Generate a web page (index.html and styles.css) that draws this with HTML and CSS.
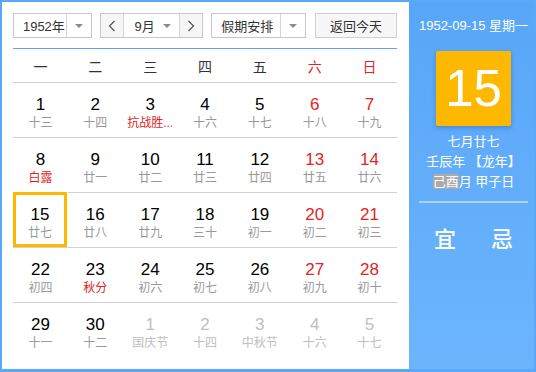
FILE: index.html
```html
<!DOCTYPE html>
<html lang="zh-CN">

<head>
    <meta charset="UTF-8">
    <title>万年历</title>
    <link rel="stylesheet" href="styles.css">
</head>

<body>
    <div class="calendar">
        <div class="main">
            <div class="toolbar">
                <div class="select year">
                    <span class="label">1952年</span>
                    <span class="caret-box"><i class="caret"></i></span>
                </div>
                <div class="select month">
                    <span class="arrow">
                        <svg width="8" height="12" viewBox="0 0 8 12"><polyline points="6.5,1 1.5,6 6.5,11" fill="none" stroke="#555" stroke-width="1.2"/></svg>
                    </span>
                    <span class="label">9月</span>
                    <i class="caret"></i>
                    <span class="arrow next">
                        <svg width="8" height="12" viewBox="0 0 8 12"><polyline points="1.5,1 6.5,6 1.5,11" fill="none" stroke="#555" stroke-width="1.2"/></svg>
                    </span>
                </div>
                <div class="select holiday">
                    <span class="label">假期安排</span>
                    <span class="caret-box"><i class="caret"></i></span>
                </div>
                <div class="btn-today">返回今天</div>
            </div>

            <div class="weekdays">
                <span>一</span><span>二</span><span>三</span><span>四</span><span>五</span>
                <span class="red">六</span><span class="red">日</span>
            </div>

            <div class="days">
                <div class="day"><b>1</b><small>十三</small></div>
                <div class="day"><b>2</b><small>十四</small></div>
                <div class="day"><b>3</b><small class="red">抗战胜...</small></div>
                <div class="day"><b>4</b><small>十六</small></div>
                <div class="day"><b>5</b><small>十七</small></div>
                <div class="day"><b class="red">6</b><small>十八</small></div>
                <div class="day"><b class="red">7</b><small>十九</small></div>

                <div class="day"><b>8</b><small class="red">白露</small></div>
                <div class="day"><b>9</b><small>廿一</small></div>
                <div class="day"><b>10</b><small>廿二</small></div>
                <div class="day"><b>11</b><small>廿三</small></div>
                <div class="day"><b>12</b><small>廿四</small></div>
                <div class="day"><b class="red">13</b><small>廿五</small></div>
                <div class="day"><b class="red">14</b><small>廿六</small></div>

                <div class="day today"><b>15</b><small>廿七</small></div>
                <div class="day"><b>16</b><small>廿八</small></div>
                <div class="day"><b>17</b><small>廿九</small></div>
                <div class="day"><b>18</b><small>三十</small></div>
                <div class="day"><b>19</b><small>初一</small></div>
                <div class="day"><b class="red">20</b><small>初二</small></div>
                <div class="day"><b class="red">21</b><small>初三</small></div>

                <div class="day"><b>22</b><small>初四</small></div>
                <div class="day"><b>23</b><small class="red">秋分</small></div>
                <div class="day"><b>24</b><small>初六</small></div>
                <div class="day"><b>25</b><small>初七</small></div>
                <div class="day"><b>26</b><small>初八</small></div>
                <div class="day"><b class="red">27</b><small>初九</small></div>
                <div class="day"><b class="red">28</b><small>初十</small></div>

                <div class="day"><b>29</b><small>十一</small></div>
                <div class="day"><b>30</b><small>十二</small></div>
                <div class="day other"><b>1</b><small>国庆节</small></div>
                <div class="day other"><b>2</b><small>十四</small></div>
                <div class="day other"><b>3</b><small>中秋节</small></div>
                <div class="day other"><b>4</b><small>十六</small></div>
                <div class="day other"><b>5</b><small>十七</small></div>
            </div>
        </div>

        <div class="side">
            <div class="side-date">1952-09-15 星期一</div>
            <div class="big-day">15</div>
            <div class="lunar">
                <p>七月廿七</p>
                <p>壬辰年 【龙年】</p>
                <p><span class="mark">己酉</span>月 甲子日</p>
            </div>
            <div class="side-line"></div>
            <div class="yiji">
                <span>宜</span>
                <span>忌</span>
            </div>
        </div>
    </div>
</body>

</html>
```

FILE: styles.css
```css
body {
    margin: 0;
    font-family: "Liberation Sans", "Noto Sans CJK SC", sans-serif;
    color: #333;
}

.calendar {
    width: 536px;
    height: 372px;
    box-sizing: border-box;
    border: 2px solid #5aa8f8;
    border-bottom-width: 3px;
    display: flex;
    background-color: white;
}

.main {
    width: 384px;
    padding: 11px 12px 0 11px;
}

/* toolbar */
.toolbar {
    display: flex;
    height: 25px;
    font-size: 13px;
}

.select {
    display: flex;
    align-items: center;
    border: 1px solid #c8c8c8;
    box-sizing: border-box;
    height: 25px;
}

.select .label {
    flex: 1;
    text-align: center;
}

.caret-box {
    width: 24px;
    height: 100%;
    border-left: 1px solid #d4d4d4;
    display: flex;
    align-items: center;
    justify-content: center;
}

.caret {
    width: 0;
    height: 0;
    border-left: 4px solid transparent;
    border-right: 4px solid transparent;
    border-top: 4px solid #8a8a8a;
}

.year {
    width: 79px;
}

.year .label {
    padding-left: 8px;
}

.month {
    width: 104px;
    margin-left: 8px;
}

.month .label {
    padding-left: 2px;
}

.month .caret {
    margin-right: 8px;
}

.arrow {
    width: 22px;
    height: 100%;
    background-color: #f6f6f6;
    border-right: 1px solid #d4d4d4;
    display: flex;
    align-items: center;
    justify-content: center;
}

.arrow.next {
    border-right: none;
    border-left: 1px solid #d4d4d4;
}

.holiday {
    width: 95px;
    margin-left: 8px;
}

.holiday .label {
    padding-left: 2px;
}

.btn-today {
    width: 82px;
    margin-left: 9px;
    box-sizing: border-box;
    border: 1px solid #d0d0d0;
    background-color: #f7f7f7;
    display: flex;
    align-items: center;
    justify-content: center;
}

/* week header */
.weekdays {
    margin-top: 10px;
    border-top: 1px solid #5aa4f0;
    display: grid;
    grid-template-columns: repeat(7, 1fr);
    height: 33px;
    align-items: center;
    font-size: 14px;
    text-align: center;
}

.red {
    color: #e42424;
}

/* days */
.days {
    display: grid;
    grid-template-columns: repeat(7, 1fr);
}

.day {
    height: 55px;
    box-sizing: border-box;
    border-top: 1px solid #d2d2d2;
    padding-top: 11px;
    text-align: center;
}

.day b {
    display: block;
    font-weight: normal;
    font-size: 17px;
    line-height: 22px;
    color: #000;
}

.day b.red {
    color: #e42424;
}

.day small {
    display: block;
    font-size: 12px;
    line-height: 14px;
    color: #999;
}

.day small.red {
    color: #e42424;
}

.day.today {
    border: 3px solid #ffb800;
    padding-top: 9px;
    width: 54px;
}

.day.other b,
.day.other small {
    color: #c0c0c0;
}

/* side panel */
.side {
    flex: 1;
    background: linear-gradient(#58a6f8, #6cb5fd);
    color: white;
    display: flex;
    flex-direction: column;
    align-items: center;
    padding-left: 4px;
}

.side-date {
    margin-top: 14px;
    font-size: 13px;
    line-height: 20px;
}

.big-day {
    margin-top: 15px;
    width: 75px;
    height: 75px;
    background-color: #ffb800;
    border-radius: 2px;
    box-shadow: 0 2px 5px rgba(0, 60, 140, 0.3);
    font-size: 51px;
    line-height: 75px;
    text-align: center;
}

.lunar {
    margin-top: 6px;
    font-size: 13px;
    text-align: center;
}

.lunar p {
    margin: 0;
    line-height: 20px;
}

.mark {
    background-color: #aaaaaa;
}

.side-line {
    margin-top: 9px;
    width: 109px;
    height: 2px;
    background-color: rgba(255, 255, 255, 0.45);
}

.yiji {
    margin-top: 18px;
    display: flex;
    gap: 35px;
    font-size: 22px;
    font-weight: 500;
}
```
